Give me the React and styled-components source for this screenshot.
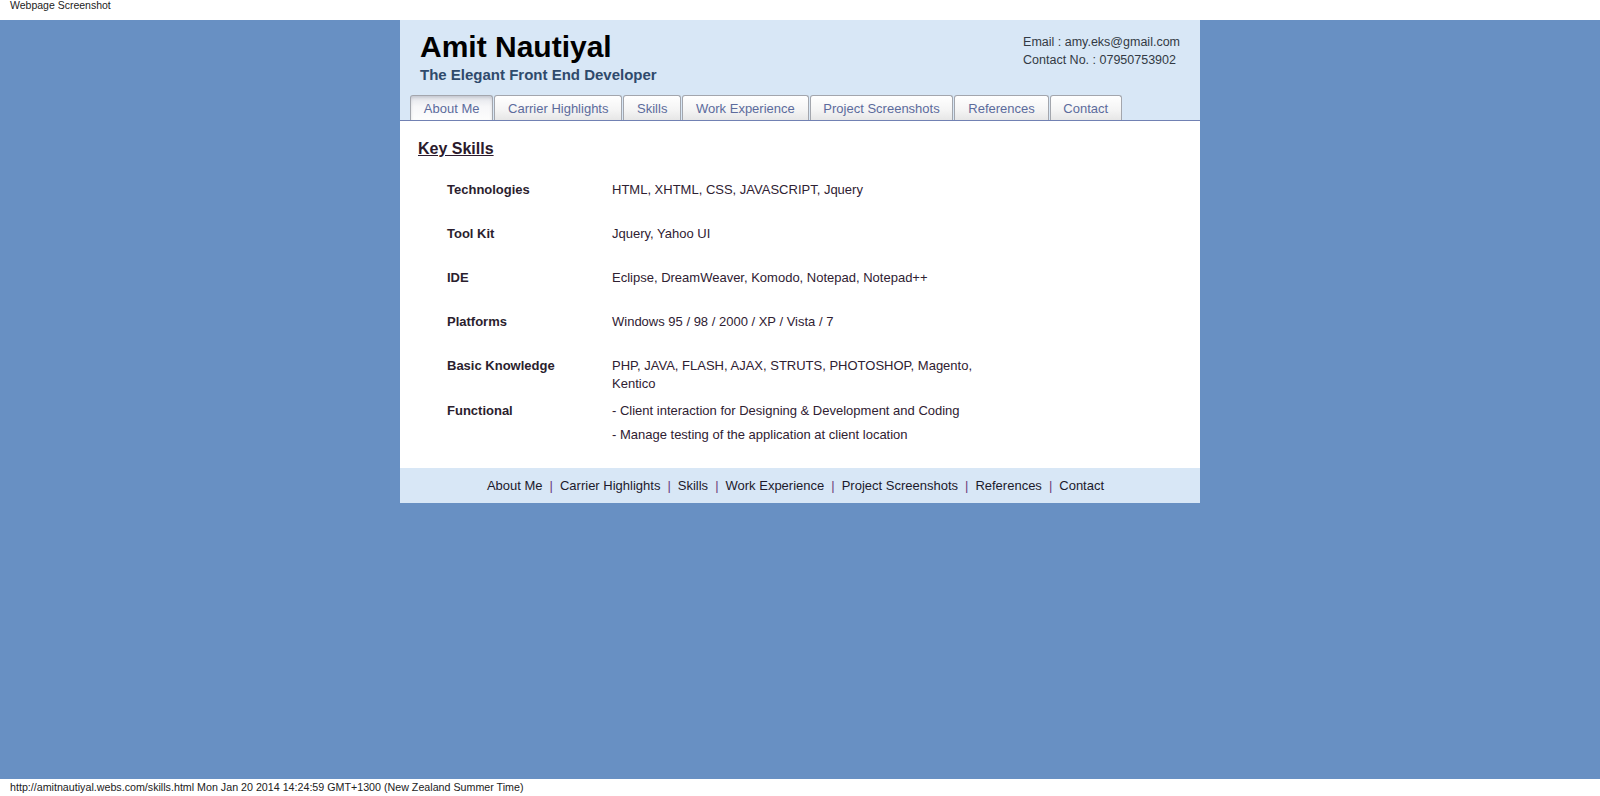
import React from 'react';
import styled, { createGlobalStyle } from 'styled-components';

const GlobalStyle = createGlobalStyle`
  html, body {
    margin: 0;
    padding: 0;
    background: #ffffff;
  }
  body {
    font-family: "Liberation Sans", Arial, sans-serif;
  }
`;

const Page = styled.div`
  display: flex;
  flex-direction: column;
  min-height: 796px;
`;

const Strip = styled.div`
  height: ${p => p.$h}px;
  background: #ffffff;
  color: #222222;
  font-size: ${p => p.$size}px;
  line-height: ${p => p.$lh}px;
  padding-left: 10px;
  white-space: nowrap;
`;

const Backdrop = styled.div`
  flex: 1;
  background: #6890c3;
`;

const Wrapper = styled.div`
  width: 800px;
  margin: 0 auto;
`;

const Header = styled.div`
  background: #d8e7f6;
  border-bottom: 1px solid #7181b3;
`;

const HeaderTop = styled.div`
  display: flex;
  justify-content: space-between;
  align-items: flex-start;
  padding: 10px 20px 0 20px;
`;

const Brand = styled.div`
  display: flex;
  flex-direction: column;
`;

const Name = styled.h1`
  margin: 0;
  font-size: 30px;
  line-height: 34px;
  font-weight: bold;
  color: #000000;
`;

const Tagline = styled.div`
  margin-top: 2px;
  font-size: 15px;
  line-height: 18px;
  font-weight: bold;
  color: #2f4a6c;
`;

const ContactBox = styled.div`
  margin-top: 4px;
  font-size: 12.5px;
  line-height: 17.5px;
  color: #333a44;
`;

const Tabs = styled.ul`
  display: flex;
  gap: 1px;
  list-style: none;
  margin: 11px 0 0 0;
  padding: 0 0 0 10px;
`;

const Tab = styled.li`
  height: 24px;
  padding: 0 12.8px;
  border: 1px solid #a3a6ad;
  border-bottom: none;
  border-radius: 3px 3px 0 0;
  background: ${p => p.$active
    ? 'linear-gradient(#e2e4ea, #f7f7f9 45%, #fdfdfd)'
    : 'linear-gradient(#ffffff, #f4f4f4 60%, #e6e6e6)'};
  box-shadow: ${p => p.$active ? 'inset 0 2px 3px rgba(120,125,140,0.25)' : 'none'};
  color: #5c6b9c;
  font-size: 13px;
  line-height: 25px;
  white-space: nowrap;
`;

const Content = styled.div`
  background: #ffffff;
  padding: 18px 18px 15px 18px;
  color: #2d1f2f;
`;

const Heading = styled.h2`
  margin: 0 0 22px 0;
  font-size: 16px;
  line-height: 20px;
  font-weight: bold;
  text-decoration: underline;
  color: #2b1a2c;
`;

const SkillTable = styled.div`
  display: grid;
  grid-template-columns: 165px 375px;
  padding-left: 29px;
`;

const Label = styled.div`
  min-height: 35px;
  padding-bottom: 9px;
  font-size: 13px;
  line-height: 18px;
  font-weight: bold;
  color: #2b1e2e;
`;

const Value = styled.div`
  min-height: 35px;
  padding-bottom: 9px;
  font-size: 13px;
  line-height: 18px;
  color: #2f2132;
`;

const Point = styled.div`
  & + & {
    margin-top: 6px;
  }
`;

const Footer = styled.div`
  background: #d8e7f6;
  height: 35px;
  padding-right: 9px;
  display: flex;
  justify-content: center;
  align-items: center;
  font-size: 13px;
  color: #1c1a2c;
`;

const FootLink = styled.span`
  white-space: nowrap;
`;

const Sep = styled.span`
  color: #6c3a7c;
  margin: 0 7px;
`;

const tabs = ['About Me', 'Carrier Highlights', 'Skills', 'Work Experience', 'Project Screenshots', 'References', 'Contact'];

const skills = [
  { label: 'Technologies', value: ['HTML, XHTML, CSS, JAVASCRIPT, Jquery'] },
  { label: 'Tool Kit', value: ['Jquery, Yahoo UI'] },
  { label: 'IDE', value: ['Eclipse, DreamWeaver, Komodo, Notepad, Notepad++'] },
  { label: 'Platforms', value: ['Windows 95 / 98 / 2000 / XP / Vista / 7'] },
  { label: 'Basic Knowledge', value: ['PHP, JAVA, FLASH, AJAX, STRUTS, PHOTOSHOP, Magento, Kentico'] },
  { label: 'Functional', value: ['- Client interaction for Designing & Development and Coding', '- Manage testing of the application at client location'] },
];

const App = () => {
  return (
    <Page>
      <GlobalStyle />
      <Strip $h={20} $size={10.5} $lh={10}>Webpage Screenshot</Strip>
      <Backdrop>
        <Wrapper>
          <Header>
            <HeaderTop>
              <Brand>
                <Name>Amit Nautiyal</Name>
                <Tagline>The Elegant Front End Developer</Tagline>
              </Brand>
              <ContactBox>
                <div>Email : amy.eks@gmail.com</div>
                <div>Contact No. : 07950753902</div>
              </ContactBox>
            </HeaderTop>
            <Tabs>
              {tabs.map((t, i) => (
                <Tab key={t} $active={i === 0}>{t}</Tab>
              ))}
            </Tabs>
          </Header>
          <Content>
            <Heading>Key Skills</Heading>
            <SkillTable>
              {skills.map(s => (
                <React.Fragment key={s.label}>
                  <Label>{s.label}</Label>
                  <Value>
                    {s.value.map(v => <Point key={v}>{v}</Point>)}
                  </Value>
                </React.Fragment>
              ))}
            </SkillTable>
          </Content>
          <Footer>
            {tabs.map((t, i) => (
              <React.Fragment key={t}>
                {i > 0 && <Sep>|</Sep>}
                <FootLink>{t}</FootLink>
              </React.Fragment>
            ))}
          </Footer>
        </Wrapper>
      </Backdrop>
      <Strip $h={17} $size={10.7} $lh={17}>
        http://amitnautiyal.webs.com/skills.html Mon Jan 20 2014 14:24:59 GMT+1300 (New Zealand Summer Time)
      </Strip>
    </Page>
  );
};

export default App;
